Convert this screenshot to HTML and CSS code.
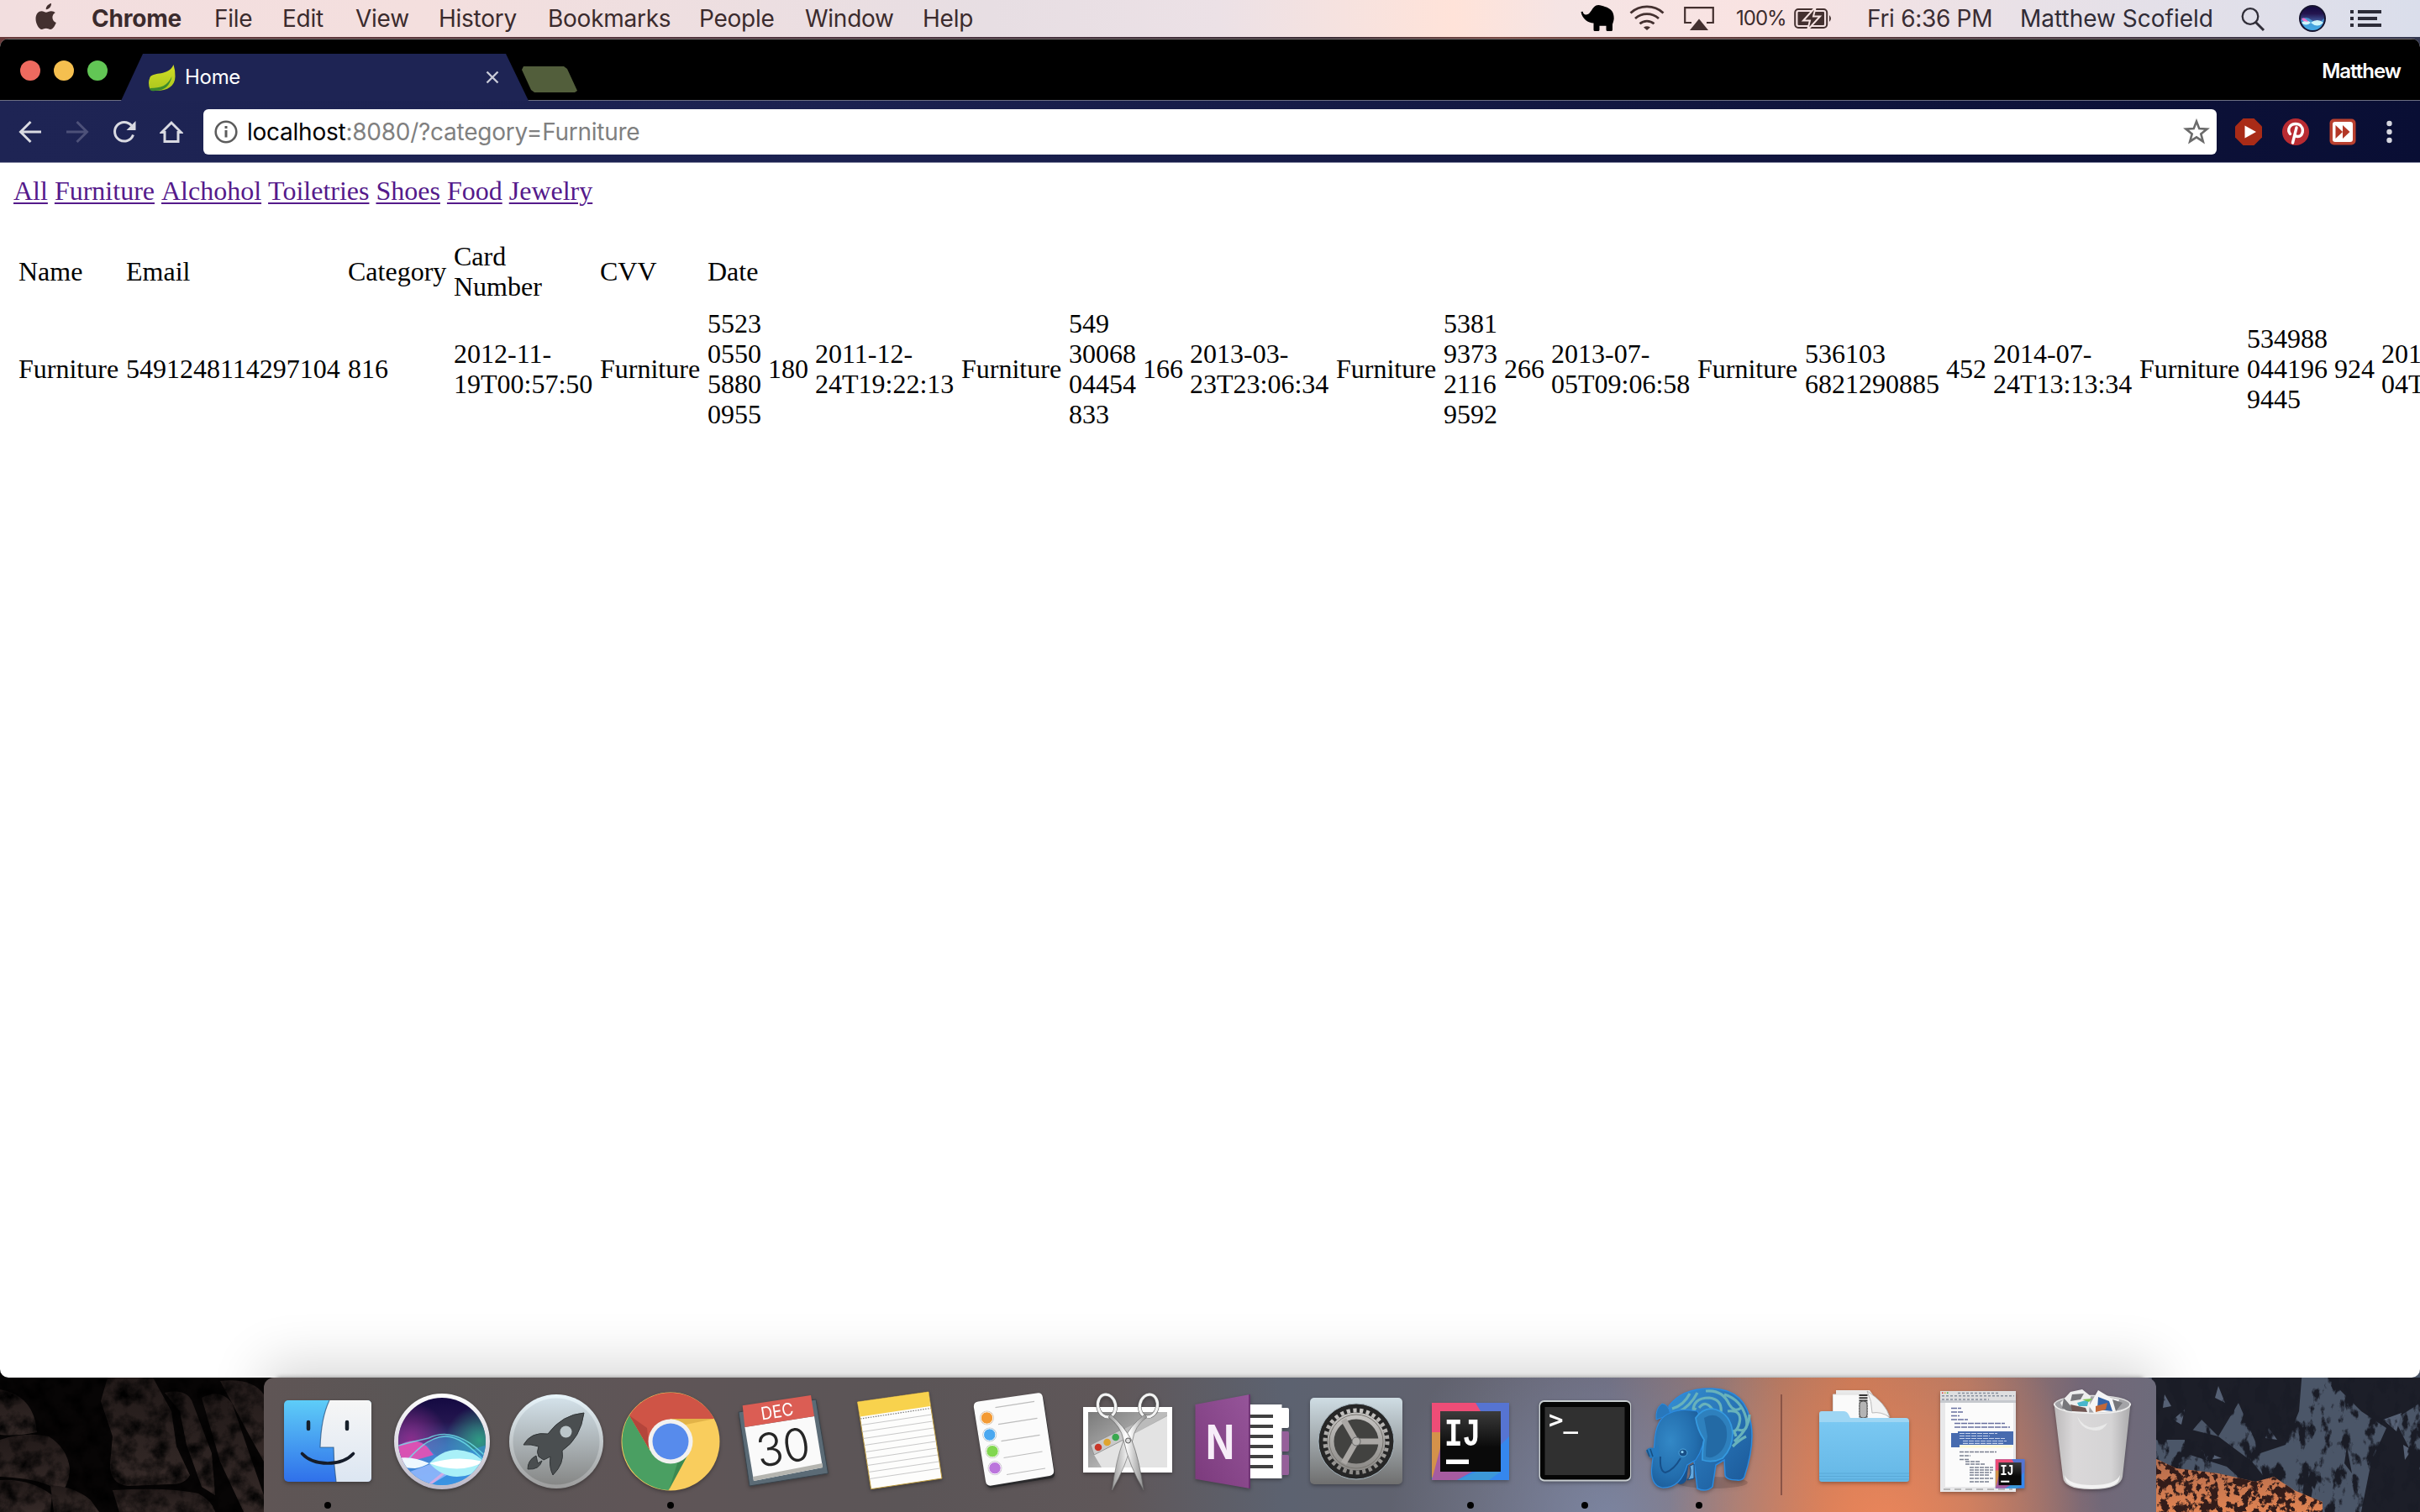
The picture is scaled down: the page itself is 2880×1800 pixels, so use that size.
FILE: index.html
```html
<!DOCTYPE html>
<html lang="en">
<head>
<meta charset="utf-8">
<title>Home</title>
<link rel="stylesheet" href="styles.css">
</head>
<body>
<svg class="wallpaper" viewBox="0 0 2880 170" aria-hidden="true">
  <defs>
    <filter id="rough" x="0" y="0" width="100%" height="100%" color-interpolation-filters="sRGB">
      <feTurbulence type="fractalNoise" baseFrequency="0.06 0.035" numOctaves="5" seed="14"/>
      <feColorMatrix values="0 0 0 0 0.1  0 0 0 0 0.11  0 0 0 0 0.15  9 0 0 0 -4.7"/>
      <feComposite in2="SourceGraphic" operator="in"/>
    </filter>
    <filter id="embers" x="0" y="0" width="100%" height="100%" color-interpolation-filters="sRGB">
      <feTurbulence type="fractalNoise" baseFrequency="0.1" numOctaves="4" seed="9"/>
      <feColorMatrix values="0 0 0 0 0.2  0 0 0 0 0.11  0 0 0 0 0.1  11 0 0 0 -5.2"/>
      <feComposite in2="SourceGraphic" operator="in"/>
    </filter>
    <filter id="grain" x="0" y="0" width="100%" height="100%" color-interpolation-filters="sRGB">
      <feTurbulence type="fractalNoise" baseFrequency="0.05" numOctaves="5" seed="2"/>
      <feColorMatrix values="0 0 0 0 0  0 0 0 0 0  0 0 0 0 0  2 0 0 0 -.75"/>
      <feComposite in2="SourceGraphic" operator="in"/>
    </filter>
    <linearGradient id="rock" x1="0" y1="0" x2="0" y2="1"><stop offset="0" stop-color="#221a19"/><stop offset="1" stop-color="#352a28"/></linearGradient>
    <linearGradient id="ember" x1="0" y1="0" x2="0" y2="1"><stop offset="0" stop-color="#b06a4c"/><stop offset="1" stop-color="#e08352"/></linearGradient>
  </defs>
  <rect width="2880" height="170" fill="#070505"/>
  <g fill="url(#rock)">
    <path d="M0 24Q34 30 42 62L44 75Q20 80 0 78Z"/>
    <path d="M0 84Q30 74 58 80Q80 94 83 118Q82 140 72 146Q52 130 0 128Z"/>
    <path d="M0 132Q36 130 62 150L60 170H0Z"/>
    <path d="M128 10H182L204 50L210 92L226 126Q220 138 200 137L152 139Q130 136 131 112L134 80L120 38Z"/>
    <path d="M134 144Q200 140 236 148Q252 156 256 170H142Z"/>
    <path d="M196 28Q224 22 230 42L252 100L256 150L240 140L222 90L214 50Z"/>
    <path d="M240 34Q262 22 276 40L300 110L314 150V170H290L262 110Z"/>
    <path d="M60 138Q90 140 108 156L118 170H64Z"/>
    <path d="M262 14Q300 10 314 30V110L292 70Z"/>
  </g>
  <rect width="314" height="170" filter="url(#grain)"/>
  <rect x="2540" width="340" height="170" fill="#4b5668"/>
  <g fill="#1c1e28">
    <path d="M2560 0H2740L2736 50L2720 90L2690 100L2664 40L2640 80L2620 60L2600 84L2566 84Z"/>
    <path d="M2770 10H2880V40L2850 60L2870 100L2880 120V170H2810L2822 110L2840 70L2810 50Z"/>
    <path d="M2600 70L2640 80L2680 110L2720 160H2700L2650 116L2600 100Z"/>
    <path d="M2744 116L2752 144L2748 168L2740 150Z"/><path d="M2793 92L2799 124L2790 112Z"/>
  </g>
  <path d="M2586 60l14-12-4 18zM2640 20l8 20-12-6zM2836 60l22-8-6 22zM2700 70l10 14-14-2zM2620 96l24 10-18 2zM2860 90l10 6-8 12zM2576 30l8 14-10 2z" fill="#566175"/>
  <rect x="2560" width="320" height="170" filter="url(#rough)"/>
  <path d="M2560 104L2590 118L2640 124L2684 134L2706 128L2730 144L2764 158V170H2560Z" fill="url(#ember)"/>
  <path d="M2560 104L2590 118L2640 124L2684 134L2706 128L2730 144L2764 158V170H2560Z" filter="url(#embers)"/>
</svg>

<header class="menubar">
  <svg class="apple" viewBox="0 0 28 32"><path d="M20 0c.4 3.6-2.8 7.400-6.200 7.200C13.300 4 16.600.5 20 0zM24.800 10.900c-5 3-4.200 9.900 1 12.100-1.200 3.200-3.800 8-6.800 8-2 0-2.800-1.200-5.200-1.200S10.500 31 8.700 31C5.200 31 1.500 24 1.500 18.300c0-5.800 3.500-9 7-9 2.200 0 4 1.500 5.400 1.500 1.300 0 3.500-1.600 6.100-1.600 2 0 3.900 1 4.800 1.700z"/></svg>
  <nav class="menus">
    <span class="app-name">Chrome</span><span>File</span><span>Edit</span><span>View</span><span>History</span><span>Bookmarks</span><span>People</span><span>Window</span><span>Help</span>
  </nav>
  <div class="status">
    <svg viewBox="0 0 40 44"><path fill="#000" d="M.5 14l2.200-.3c.5 3.600 3 4.600 6.500 3.100C13 14 14 9 18.500 6.500c3-1.500 7 .2 10.500 1.500 7 2 10.800 6 10.700 14-.2 3-1.200 5-1.700 7v6.500q0 1.500-1.500 1.500H32q-1.500 0-1.500-1.500v-4.700h-8v4.700q0 1.500-1.500 1.500h-4q-1.500 0-1.500-1.500V27.500C9 27 2 23 .5 14z"/></svg>
    <svg viewBox="0 0 42 44" fill="none" stroke="#43302f" stroke-width="2.800"><path d="M1.500 15.500a29 29 0 0 1 39 0M7 22a21 21 0 0 1 28 0M12.500 28.300a13 13 0 0 1 17 0"/><path d="M17 32.500q4-2.500 8 0L21 36z" fill="#43302f" stroke="none"/></svg>
    <svg viewBox="0 0 36 44"><path d="M9 27H1.200V9.200H34.800V27H27" fill="none" stroke="#43302f" stroke-width="2.200"/><path d="M18 22.500L29 36H7z" fill="#43302f"/></svg>
    <span class="percent">100%</span>
    <svg viewBox="0 0 46 44"><rect x="1.200" y="11" width="38" height="22" rx="4" fill="none" stroke="#43302f" stroke-width="2"/><rect x="4.500" y="14" width="31.500" height="16" rx="1" fill="#43302f"/><path d="M42 18q4 4 0 8z" fill="#43302f"/><path d="M26 8L11 24.500h8L16 36L31 19.500h-8z" fill="#43302f" stroke="#f6e3e2" stroke-width="2"/></svg>
    <span class="clock">Fri 6:36 PM</span>
    <span class="user">Matthew Scofield</span>
    <svg viewBox="0 0 30 44" fill="none" stroke="#302e38"><circle cx="11" cy="19.500" r="9.300" stroke-width="2.300"/><path d="M17.500 26.500L27 36" stroke-width="3"/></svg>
    <svg viewBox="0 0 32 44"><circle cx="16" cy="22" r="16" fill="#15132e"/><circle cx="16" cy="22" r="14" fill="url(#siri-bg)"/><path d="M2 24Q8 18 15 24T30 22Q28 36 16 36Q6 36 2 24z" fill="#4bb8ee" opacity=".7"/><path d="M3 27Q9 22 14 27Q22 21 29 27Q22 34 14 27Q8 32 3 27z" fill="#dff" opacity=".9"/><path d="M3 22Q7 20 11 26L5 25z" fill="#ee74c8"/></svg>
    <svg viewBox="0 0 38 44" fill="#2c2c38"><path d="M0 12h4v4H0zM9 12h28v4H9zM0 20h4v4H0zM9 20h23v4H9zM0 28h4v4H0zM9 28h28v4H9z"/></svg>
  </div>
</header>

<main class="window">
  <div class="tabstrip">
    <div class="lights"><i class="close"></i><i class="minimise"></i><i class="maximise"></i></div>
    <div class="tab">
      <svg class="leaf" viewBox="0 0 32 32"><defs><linearGradient id="leafg" x1="0" y1="0" x2="0" y2="1"><stop offset="0" stop-color="#d3de25"/><stop offset="1" stop-color="#aac71e"/></linearGradient></defs><path d="M30 0q2 6 2 14c0 12-10 17.500-24 17l-6-2q-3-7 0-14C6 8 24 14 30 0z" fill="url(#leafg)"/><path d="M2 28c13 0 21-3 26-14-2 11-9 17-20 17-4 1-7-1-6-3z" fill="#3c8b2c"/></svg>
      <span class="tab-title">Home</span>
      <svg class="tab-close" viewBox="0 0 16 16"><path d="M1.500 1.500l13 13m0-13l-13 13" stroke="#c9cbd8" stroke-width="2.400"/></svg>
    </div>
    <div class="new-tab"></div>
    <span class="profile">Matthew</span>
  </div>
  <div class="toolbar">
    <svg class="nav-icon" viewBox="0 0 28 28" fill="none" stroke="#d9dae2" stroke-width="3"><path d="M27 14H3M14.500 2L2.500 14l12 12"/></svg>
    <svg class="nav-icon" viewBox="0 0 28 28" fill="none" stroke="#4d5179" stroke-width="3"><path d="M1 14h24M13.500 2l12 12-12 12"/></svg>
    <svg class="nav-icon" viewBox="0 0 28 28"><path d="M24.500 17.500A11.300 11.300 0 1 1 22.500 6.500" fill="none" stroke="#d9dae2" stroke-width="3"/><path d="M27.500 1v11h-11z" fill="#d9dae2"/></svg>
    <svg class="nav-icon" viewBox="0 0 28 28" fill="none" stroke="#d9dae2" stroke-width="3"><path d="M2.500 14.500L14 3l11.500 11.500H22V25.500H6V14.500z"/></svg>
    <div class="omnibox">
      <svg class="info" viewBox="0 0 28 28"><circle cx="14" cy="14" r="12.300" fill="none" stroke="#5c5c5c" stroke-width="2.600"/><path d="M12.500 12h3v8.500h-3zM12.500 7h3v3h-3z" fill="#5c5c5c"/></svg>
      <span class="url"><b>localhost</b>:8080/?category=Furniture</span>
      <svg class="star" viewBox="0 0 32 32"><path d="M16 3.500l3.300 8.600 9.200.5-7.200 5.800 2.500 9-7.800-5.100-7.800 5.100 2.500-9-7.200-5.800 9.200-.5z" fill="none" stroke="#6b6b6b" stroke-width="2.600"/></svg>
    </div>
    <svg class="ext" viewBox="0 0 32 32"><path d="M9.500 0h13L32 9.500v13L22.500 32h-13L0 22.500v-13z" fill="#a92b17"/><path d="M11.500 8.500L25 16l-13.500 7.500z" fill="#fff"/></svg>
    <svg class="ext" viewBox="0 0 32 32"><circle cx="16" cy="16" r="16" fill="#b92b31"/><path d="M9.500 18.500C5.500 13 9 6.500 16 6.500c11 0 10.500 15 2.500 15-2 0-3.500-1-3.500-2.500M17 11l-4.500 18" fill="none" stroke="#fff" stroke-width="3.400" stroke-linecap="round"/></svg>
    <svg class="ext" viewBox="0 0 32 32"><rect x=".5" y=".5" width="31" height="31" rx="5" fill="#b9402f"/><rect x="4" y="4" width="24" height="24" rx="3" fill="#fff"/><path d="M7.500 8l8.500 8-8.500 8zM16 8l8.500 8-8.500 8z" fill="#b33726"/></svg>
    <svg class="ext" viewBox="0 0 32 32" fill="#d5d6df"><circle cx="15.500" cy="6" r="3.200"/><circle cx="15.500" cy="16" r="3.200"/><circle cx="15.500" cy="26" r="3.200"/></svg>
  </div>
  <section class="page">
    <nav class="categories"><a href="#">All</a> <a href="#">Furniture</a> <a href="#">Alchohol</a> <a href="#">Toiletries</a> <a href="#">Shoes</a> <a href="#">Food</a> <a href="#">Jewelry</a></nav>
    <table class="purchases">
      <colgroup><col class="name"><col class="d16"><col class="category"><col class="date"><col class="name"><col class="d4"><col class="d3"><col class="date"><col class="name"><col class="d5"><col class="d3"><col class="date"><col class="name"><col class="d4"><col class="d3"><col class="date"><col class="name"><col class="d10"><col class="d3"><col class="date"><col class="name"><col class="d6"><col class="d3"><col class="date"></colgroup>
      <tr><td>Name</td><td>Email</td><td>Category</td><td>Card<br>Number</td><td>CVV</td><td>Date</td></tr>
      <tr>
        <td>Furniture</td><td>5491248114297104</td><td>816</td><td>2012-11-<br>19T00:57:50</td>
        <td>Furniture</td><td>5523<br>0550<br>5880<br>0955</td><td>180</td><td>2011-12-<br>24T19:22:13</td>
        <td>Furniture</td><td>549<br>30068<br>04454<br>833</td><td>166</td><td>2013-03-<br>23T23:06:34</td>
        <td>Furniture</td><td>5381<br>9373<br>2116<br>9592</td><td>266</td><td>2013-07-<br>05T09:06:58</td>
        <td>Furniture</td><td>536103<br>6821290885</td><td>452</td><td>2014-07-<br>24T13:13:34</td>
        <td>Furniture</td><td>534988<br>044196<br>9445</td><td>924</td><td>201<br>04T</td>
      </tr>
    </table>
  </section>
</main>

<footer class="dock">
  <!-- Finder -->
  <div class="slot running"><svg viewBox="0 0 136 160">
    <defs><linearGradient id="fb" x1="0" y1="0" x2="0" y2="1"><stop offset="0" stop-color="#5ecdf8"/><stop offset="1" stop-color="#2f70ea"/></linearGradient><linearGradient id="fw" x1="0" y1="0" x2="0" y2="1"><stop offset="0" stop-color="#f6f6f6"/><stop offset="1" stop-color="#dce6f2"/></linearGradient></defs>
    <rect x="16" y="27" width="104" height="97" rx="5" fill="url(#fb)"/>
    <path d="M70 27H115q5 0 5 5V119q0 5-5 5H78Q75 103 75 83H59Q60 48 70 27z" fill="url(#fw)"/>
    <path d="M70 27Q60 48 59 83H75Q75 103 78 124" fill="none" stroke="#27507a" stroke-width="1.200" opacity=".7"/>
    <path d="M45 53v8M91 53v8" stroke="#16202a" stroke-width="4.500" stroke-linecap="round"/>
    <path d="M37.500 90.500Q48 102 68 102T98.500 90.500" fill="none" stroke="#151c2a" stroke-width="3.600" stroke-linecap="round"/>
  </svg></div>
  <!-- Siri -->
  <div class="slot"><svg viewBox="0 0 136 160">
    <defs><linearGradient id="siri-bg" x1="0" y1="0" x2="0" y2="1"><stop offset="0" stop-color="#120840"/><stop offset=".3" stop-color="#24164f"/><stop offset=".55" stop-color="#3a4a8c"/><stop offset="1" stop-color="#2c8bd4"/></linearGradient>
    <radialGradient id="sg" cx=".92" cy=".5" r=".38"><stop offset="0" stop-color="#2f9a83"/><stop offset="1" stop-color="#2f9a83" stop-opacity="0"/></radialGradient><radialGradient id="sp" cx=".15" cy=".5" r=".42"><stop offset="0" stop-color="#8a2d8c"/><stop offset="1" stop-color="#8a2d8c" stop-opacity="0"/></radialGradient><linearGradient id="ring" x1="0" y1="0" x2="0" y2="1"><stop offset="0" stop-color="#fff"/><stop offset="1" stop-color="#bcb9c8"/></linearGradient>
    <clipPath id="sc"><circle cx="68" cy="76" r="52"/></clipPath></defs>
    <circle cx="68" cy="76" r="57" fill="url(#ring)"/>
    <g clip-path="url(#sc)"><rect x="15" y="20" width="106" height="110" fill="url(#siri-bg)"/><rect x="15" y="20" width="106" height="110" fill="url(#sg)"/><rect x="15" y="20" width="106" height="110" fill="url(#sp)"/>
    <path d="M10 98Q30 95 48 80Q74 58 98 78Q110 92 122 96V132H10z" fill="#42aef0" opacity=".45"/>
    <path d="M10 86Q32 66 52 82Q66 106 90 92Q108 84 122 80V132H30z" fill="#3e8fe8" opacity=".5"/>
    <path d="M12 84Q34 68 50 82L58 92Q32 100 16 102z" fill="#f04fb2" opacity=".85"/>
    <path d="M12 82Q34 76 52 72Q84 56 122 96M24 102Q50 70 72 70T122 104" fill="none" stroke="#6fe2ea" stroke-width="1.500" opacity=".8"/>
    <path d="M54 103L74 116L50 130L30 112z" fill="#9bbcff" opacity=".8"/><path d="M72 112L50 130" stroke="#f1a8dc" stroke-width="3" opacity=".7"/>
    <path d="M12 96Q28 94 38 97Q46 99 53 102Q44 107 36 108Q24 108 14 104z" fill="#eef8ff"/>
    <path d="M53 102Q68 86 86 86Q104 87 116 98V106Q104 118 86 118Q68 118 53 102z" fill="#a9f0f8"/><path d="M53 102Q86 92 118 100Q90 116 53 102z" fill="#fff"/></g>
  </svg></div>
  <!-- Launchpad -->
  <div class="slot"><svg viewBox="0 0 136 160">
    <defs><linearGradient id="lp" x1="0" y1="0" x2="0" y2="1"><stop offset="0" stop-color="#d3e1e9"/><stop offset="1" stop-color="#868786"/></linearGradient><linearGradient id="lr" x1="0" y1="0" x2="0" y2="1"><stop offset="0" stop-color="#e8f5fb"/><stop offset="1" stop-color="#9c9c9c"/></linearGradient></defs>
    <circle cx="68" cy="76" r="56" fill="url(#lr)"/><circle cx="68" cy="76" r="51.500" fill="url(#lp)"/>
    <g fill="#4a4e50" stroke="#303436" stroke-width="1"><path d="M101 42Q75 44 58 67Q38 64 29 80Q38 79 47 82Q44 89 47 94L53 98L61 94Q59 106 64 116Q78 102 75 87Q97 72 101 42z"/><path d="M44 93Q34 98 34 109Q48 110 51 99L46 102z"/></g><circle cx="79.500" cy="64.500" r="7" fill="#bcc6ca"/>
  </svg></div>
  <!-- Chrome -->
  <div class="slot running"><svg viewBox="0 0 136 160">
    <circle cx="68" cy="76" r="58.500" fill="#f9cd5d"/>
    <path d="M19 45A58.500 58.500 0 0 1 120 49H68L41 82z" fill="#cf5446"/>
    <path d="M19 45A58.500 58.500 0 0 0 65.500 134L89 91L68 102L43 86z" fill="#4a9f62"/>
    <path d="M68 49H120L86 56z" fill="#d9a840" opacity=".7"/><path d="M19 45L43 86L40 60z" fill="#b4453b"/><path d="M89 91L66 134L78 96z" fill="#35804a" opacity=".7"/>
    <circle cx="68" cy="76" r="26.500" fill="#f2f1f0"/><circle cx="68" cy="76" r="21.500" fill="#578bec"/>
  </svg></div>
  <!-- Calendar -->
  <div class="slot"><svg viewBox="0 0 136 160">
    <path d="M13 41L105 26L119.500 114L26 129z" fill="#5b6b76" stroke="#39444c"/>
    <path d="M20.400 59L103 46L113 107L31 123z" fill="#fafafa"/><path d="M30 118L112.500 102L113 107L31 123z" fill="#b5b5b0"/>
    <path d="M17.700 33.300L99 21L103 46L20.400 59z" fill="#db5d54"/>
    <text class="cal-month" transform="translate(60 47.500) rotate(-9)" text-anchor="middle" textLength="39" lengthAdjust="spacingAndGlyphs">DEC</text>
    <text class="cal-day" transform="translate(69 102) rotate(-9)" text-anchor="middle" textLength="64" lengthAdjust="spacingAndGlyphs">30</text>
  </svg></div>
  <!-- Notes -->
  <div class="slot"><svg viewBox="0 0 136 160">
    <path d="M18.500 29L103 17L119 120L34.600 132.700z" fill="#fdfdfc" stroke="#b9973a"/>
    <path d="M18.500 29L103 17L105 34L21.700 46.500z" fill="#f8d24d"/><path d="M22 49L105.500 36.500" stroke="#777" stroke-width="1.200" stroke-dasharray="1.500 1.500"/>
    <path d="M23 56.500L106.500 44M24.200 64.500L107.700 52M25.500 72.500L109 60M26.700 80.500L110.200 68M28 88.500L111.500 76M29.200 96.500L112.700 84M30.500 104.500L114 92M31.700 112.500L115.200 100M33 120.500L116.500 108" stroke="#c9c9c9" stroke-width="1.200"/>
  </svg></div>
  <!-- Reminders -->
  <div class="slot"><svg viewBox="0 0 136 160">
    <path d="M26 31L97 21q6-1 7 5L117 113q1 6-5 7L43 131q-6 1-7-5L21 38q-1-6 5-7z" fill="#2a2a2c"/>
    <path d="M26 28.500L96 18.500q6-1 7 5L116 110q1 6-5 7L42 128.500q-6 1-7-5L21 36q-1-6.500 5-7.500z" fill="#fbfbfb"/>
    <g stroke="#ccc" stroke-width="1"><circle cx="36.500" cy="48" r="8" fill="#f39a34"/><circle cx="39.700" cy="68" r="8" fill="#4aa8f0"/><circle cx="43" cy="87.700" r="8" fill="#82d750"/><circle cx="46" cy="107.700" r="8" fill="#bb75dc"/></g>
    <g fill="none" stroke="#fff" stroke-width="1"><circle cx="36.500" cy="48" r="7.200"/><circle cx="39.700" cy="68" r="7.200"/><circle cx="43" cy="87.700" r="7.200"/><circle cx="46" cy="107.700" r="7.200"/></g>
    <path d="M46.500 35.700L93 28.300M50 55.700L96.500 48.300M53.500 75.700L99.500 68.300M56.500 95.500L102.500 88M60 115.500L106 108" stroke="#bdbdbd" stroke-width="1.200"/>
  </svg></div>
  <!-- Grab -->
  <div class="slot"><svg viewBox="0 0 136 160">
    <defs><linearGradient id="gb" x1="0" y1="0" x2="1" y2="1"><stop offset="0" stop-color="#7a7a7a"/><stop offset=".5" stop-color="#aaa"/><stop offset="1" stop-color="#eee"/></linearGradient><linearGradient id="blade" x1="0" y1="0" x2="1" y2="0"><stop offset="0" stop-color="#999"/><stop offset=".5" stop-color="#fff"/><stop offset="1" stop-color="#8b8b8b"/></linearGradient></defs>
    <rect x="15" y="35" width="106" height="78" fill="#fff"/><rect x="21" y="41" width="94" height="66" fill="url(#gb)"/>
    <path d="M24 80L106 41H115V45L28 93z" fill="#bbb"/><path d="M28 92L115 46V107H37z" fill="#e3e3e3"/><path d="M24 80L64 60L67 72L28 92z" fill="#c9c9c9" stroke="#888" stroke-width=".8"/>
    <circle cx="33" cy="83" r="4.300" fill="#c93628"/><circle cx="43.600" cy="77" r="4.300" fill="#dfa42f"/><circle cx="53.700" cy="71" r="4.300" fill="#3aa84f"/>
    <g fill="none" stroke="#666" stroke-width="4.400"><ellipse cx="43" cy="33.500" rx="10.500" ry="13.500" transform="rotate(-12 43 33)"/><ellipse cx="93" cy="33.500" rx="10.500" ry="13.500" transform="rotate(12 93 33)"/></g>
    <g fill="none" stroke="#f3f3f3" stroke-width="3.200"><ellipse cx="43" cy="33.500" rx="10.500" ry="13.500" transform="rotate(-12 43 33)"/><ellipse cx="93" cy="33.500" rx="10.500" ry="13.500" transform="rotate(12 93 33)"/></g>
    <path d="M88 44L91 47Q76 58 74 74Q66 106 49.500 134Q54 98 63 75Q70 58 88 44z" fill="url(#blade)" stroke="#777" stroke-width=".7"/>
    <path d="M48 44L45 47Q60 58 63 74Q70 106 87 134Q82 98 73 75Q64 58 48 44z" fill="url(#blade)" stroke="#666" stroke-width=".7"/><circle cx="68.500" cy="75" r="3" fill="#ddd" stroke="#555"/>
  </svg></div>
  <!-- OneNote -->
  <div class="slot"><svg viewBox="0 0 136 160">
    <defs><linearGradient id="on" x1="0" y1="1" x2="1" y2="0"><stop offset="0" stop-color="#7b3a7c"/><stop offset="1" stop-color="#96559a"/></linearGradient></defs>
    <path d="M110 36h12q2 0 2 2v20q0 2-2 2h-12zM70 32h45.500v88H70z" fill="#fff"/><path d="M115.500 64h7q1.500 0 1.500 2v20q0 2-1.500 2h-7zM115.500 92h7q1.500 0 1.500 2v20q0 2-1.500 2h-7z" fill="#96609a"/>
    <path d="M77 46h28M77 58h28M77 70h28M77 82h28M77 94h28M77 106h28" stroke="#404040" stroke-width="4"/>
    <path d="M12.500 32L77.600 20V132L12.500 120.700z" fill="url(#on)"/><path d="M77 20v112" stroke="#65286a" stroke-width="1.500"/>
    <text class="onenote" x="25" y="96.500" textLength="34" lengthAdjust="spacingAndGlyphs">N</text>
  </svg></div>
  <!-- System Preferences -->
  <div class="slot"><svg viewBox="0 0 136 160">
    <defs><linearGradient id="pf" x1="0" y1="0" x2="0" y2="1"><stop offset="0" stop-color="#cfdde4"/><stop offset="1" stop-color="#6f6f6f"/></linearGradient><linearGradient id="gear" x1="0" y1="0" x2="0" y2="1"><stop offset="0" stop-color="#c4c2c0"/><stop offset="1" stop-color="#8e8c89"/></linearGradient></defs>
    <rect x="13" y="24" width="110" height="103" rx="5" fill="url(#pf)"/><circle cx="68" cy="76" r="45" fill="#262626" stroke="#a8b7c0" stroke-width="1"/>
    <circle cx="68" cy="76" r="37" fill="none" stroke="url(#gear)" stroke-width="5" stroke-dasharray="4.200 3.548"/>
    <circle cx="68" cy="76" r="30.500" fill="#424240" stroke="url(#gear)" stroke-width="8"/><circle cx="68" cy="76" r="32" fill="none" stroke="#77746f" stroke-width="1"/>
    <path d="M68 76H98M68 76L53 50M68 76L53 102" stroke="#aaa7a4" stroke-width="7"/><circle cx="68" cy="76" r="5" fill="#b4b2af" stroke="#666"/>
  </svg></div>
  <!-- IntelliJ IDEA -->
  <div class="slot running"><svg viewBox="0 0 136 160">
    <defs><linearGradient id="ijk" x1="0" y1="0" x2="0" y2="1"><stop offset="0" stop-color="#3b3b3b"/><stop offset=".6" stop-color="#0a0a0a"/></linearGradient>
    <g id="ij"><path d="M22 30H114V122H22z" fill="#3587ee"/><path d="M22 30H75L88 50L40 76L22 66z" fill="#ee4d77"/><path d="M74 30H114V70L104 80L80 40z" fill="#5674d2"/><path d="M22 65H40L32 100L22 120z" fill="#d4924a"/><path d="M32 84L22 122H52L70 112z" fill="#a65ca0"/><path d="M52 122L80 110L104 112L90 122z" fill="#3c98d8"/><path d="M32 40H104V112H32z" fill="url(#ijk)"/><text class="ij-text" x="37" y="81" textLength="43" lengthAdjust="spacingAndGlyphs">IJ</text><path d="M39 97.500H66V103H39z" fill="#fff"/></g></defs>
    <use href="#ij"/>
  </svg></div>
  <!-- Terminal -->
  <div class="slot running"><svg viewBox="0 0 136 160">
    <rect x="13.600" y="27" width="109.500" height="96.500" rx="6" fill="#c9cfd1"/><rect x="15" y="29" width="107" height="92.500" rx="5" fill="#050505"/><rect x="20.500" y="35" width="95" height="81" fill="#303030"/>
    <text class="prompt" x="25" y="60" textLength="35" lengthAdjust="spacingAndGlyphs">&gt;_</text>
  </svg></div>
  <!-- Postgres elephant -->
  <div class="slot running"><svg viewBox="0 0 136 160">
    <defs><linearGradient id="el" x1="0" y1="0" x2="1" y2="1"><stop offset="0" stop-color="#358fd3"/><stop offset="1" stop-color="#1a5797"/></linearGradient><radialGradient id="eh" cx=".35" cy=".4" r=".75"><stop offset="0" stop-color="#3388c6"/><stop offset=".6" stop-color="#236eae"/><stop offset="1" stop-color="#195590"/></radialGradient></defs>
    <ellipse cx="84" cy="125" rx="42" ry="7" fill="#000" opacity=".14"/>
    <path d="M38 100L41 125Q48 130 53 122L56 100z" fill="#17528f"/>
    <path d="M32 34Q48 12 84 13Q124 14 130 56Q134 82 122 118Q120 123 113 122Q100 122 99 116L98 98L88 104L84 130Q76 137 66 132L62 100L40 70z" fill="url(#el)" stroke="#2b8be0" stroke-width="1.500"/>
    <g fill="none" stroke="#68b2bb" stroke-width="3.200"><path d="M61 42Q60 24 80 24Q96 26 94 42M68 36Q76 26 84 38M36 37Q50 33 57 19M42 42Q58 34 66 18M48 46Q60 44 64 36M76 16Q96 14 104 32Q110 42 118 36M102 40Q120 38 116 54T102 60M98 20Q118 26 124 48Q128 66 114 62M110 76Q128 60 128 44M108 82Q116 74 124 70M112 70Q110 62 106 64"/></g>
    <path d="M17 50Q16 36 24 31Q32 32 34 44z" fill="#2877bb" stroke="#2b8be0"/>
    <path d="M34 42Q16 48 15 78L12 104Q9 128 24 131Q46 132 54 104L64 98Q74 84 76 60L66 40Q46 36 34 42z" fill="url(#eh)" stroke="#2b8be0" stroke-width="1.200"/>
    <path d="M22 94Q21 112 28 113Q38 110 46 96" fill="none" stroke="#174f88" stroke-width="2"/><path d="M20 94L10 96L5 88Q6 82 15 84L20 80z" fill="#2679bd"/><path d="M6 86L9 94M10 85L13 94" stroke="#174f80" stroke-width="1.500"/>
    <path d="M57 105Q60 116 54 122L62 120L62 103z" fill="#63a9df" stroke="#15477c"/>
    <path d="M64 48Q74 34 88 38Q106 44 108 66Q108 84 96 96Q84 102 72 98Q72 84 74 74Q66 62 64 48z" fill="#2e80bd" stroke="#3599df" stroke-width="1.800"/><path d="M74 48Q90 38 100 58Q104 76 94 88Q84 98 76 94Q76 80 78 70z" fill="#236aa5"/>
    <ellipse cx="49" cy="89.500" rx="5" ry="4.500" fill="#184f87" stroke="#4da5df"/><circle cx="48" cy="88.500" r="1.600" fill="#8dd3f5"/>
  </svg></div>
  <div class="divider"></div>
  <!-- Downloads -->
  <div class="slot"><svg viewBox="0 0 136 160">
    <defs><linearGradient id="fo" x1="0" y1="0" x2="0" y2="1"><stop offset="0" stop-color="#7ac8f2"/><stop offset="1" stop-color="#65b7e6"/></linearGradient></defs>
    <path d="M35 15H75L100 50V60H35z" fill="#e9e9e9"/><path d="M31.500 20H70Q80 20 98 48V60H31.500z" fill="#fafafa" stroke="#ddd"/><path d="M72 16Q94 30 99 47Q88 40 78 42Q78 28 72 16z" fill="#f2f2f2" stroke="#aaa" stroke-width=".8"/>
    <path d="M67.500 20V50" stroke="#333" stroke-width="10" stroke-dasharray="2 1.200"/><rect x="63" y="28" width="9" height="20" rx="4" fill="#b4b4b4" stroke="#555"/>
    <path d="M18 40H44q4 0 6 4l2 4H118q4 0 4 4V70H15V43q0-3 3-3z" fill="#9ed6f4"/><path d="M15 53H122V121q0 3-3 3H18q-3 0-3-3z" fill="url(#fo)"/><path d="M15 114H122M15 117.500H122M15 121H122" stroke="#57a5d3" stroke-width=".8"/>
  </svg></div>
  <!-- Minimised editor window -->
  <div class="slot"><svg viewBox="0 0 136 160">
    <rect x="23" y="16" width="90" height="120" fill="#fbfbfb"/><path d="M23 16h90v11H23z" fill="#dedee0"/><path d="M23 27h90v3H23z" fill="#c6c9ce"/><path d="M23 30h6v106H23zM110 30h3v106h-3zM23 130h90v6H23z" fill="#e8e8ea"/>
    <path d="M25 18.200h1.500" stroke="#d33" stroke-width="1.500"/><path d="M28 18.200h1.500" stroke="#da3" stroke-width="1.500"/><path d="M31 18.200h1.500" stroke="#3a4" stroke-width="1.500"/>
    <path d="M44 18.500h50M25 21.800h86M25 26h56" stroke="#88909d" stroke-width="1.400" stroke-dasharray="3 2"/>
    <path d="M36 36.500h12M36 41h14M36 45.500h10M36 50h20M40 54.500h60M40 59h66" stroke="#6870a0" stroke-width="1.300" stroke-dasharray="7 1"/>
    <path d="M36 66h8v-2h66v16H46v3H36z" fill="#476baf"/><path d="M46 66.500h45M46 69.500h36M46 72.500h54M50 75.500h52M50 78.300h48" stroke="#c5d2ec" stroke-width="1.200" stroke-dasharray="6 1"/>
    <path d="M46 88.500h44M46 93h13M46 97.500h11M53 100h18M53 103h24M58 107h28M58 110h28M58 113h26M58 116h24M58 120h28M58 124h24" stroke="#7b8191" stroke-width="1.300" stroke-dasharray="5 1"/><path d="M27 133h82" stroke="#888" stroke-dasharray="8 5"/><path d="M46 80.500h63v3h-63z" fill="#fff9d5"/>
    <use href="#ij" transform="translate(80.500 86) scale(.376)"/>
  </svg></div>
  <!-- Trash -->
  <div class="slot"><svg viewBox="0 0 136 160">
    <defs><linearGradient id="tr" x1="0" y1="0" x2="1" y2="0"><stop offset="0" stop-color="#bebdbd"/><stop offset=".25" stop-color="#dedddd"/><stop offset=".75" stop-color="#d8d8d8"/><stop offset="1" stop-color="#adadae"/></linearGradient></defs>
    <ellipse cx="68" cy="32" rx="45" ry="10.500" fill="#a3a3a7" stroke="#ddd" stroke-width="1.500"/>
    <path d="M30 30L42 17L56 14L66 22L64 42H36z" fill="#eee"/><path d="M64 34L75 15L90 24L100 26L96 40L70 42z" fill="#f5f5f5"/><path d="M34 24L46 38L42 42L32 36zM44 20L58 19L54 26L42 28zM92 26L104 30L96 40z" fill="#77777b"/><path d="M75 23L88 28L92 40L74 38z" fill="#3464a8"/><path d="M72 34L86 30L84 38L72 41z" fill="#c26838"/><path d="M50 30L64 26L62 34L52 34z" fill="#49b6cc"/><path d="M56 26L68 25L64 29z" fill="#7bc64c"/><path d="M42 32L60 36L62 41L44 40z" fill="#705653"/>
    <path d="M22.500 31Q24 42 68 42.500T113.500 31L104 118Q102 132.500 68 133T33 118z" fill="url(#tr)" opacity=".97"/><path d="M35 116Q40 128 68 128T101 116L100 121Q97 132 68 132T36 121z" fill="#f3f3f3"/>
    <path d="M50 46Q62 68 86 54Q80 66 66 62Q54 60 50 46z" fill="#f1f1f1" opacity=".7"/><path d="M22.500 31Q24 42 68 42.500T113.500 31" fill="none" stroke="#f0f0f0" stroke-width="1.500"/>
  </svg></div>
</footer>
</body>
</html>
```
FILE: styles.css
```css
* { box-sizing: border-box; }

body {
  position: relative;
  display: grid;
  grid-template-rows: 46px 1594px 160px;
  width: 2880px;
  height: 1800px;
  margin: 0;
  overflow: hidden;
  background: linear-gradient(90deg, #6b3c3c, #4a3440 40%, #3c2d36 55%, #7a4a44 62%, #5c3a3c 75%, #343850);
  font-family: Inter, "Liberation Sans", sans-serif;
}

svg { display: block; flex: none; }

.wallpaper {
  position: absolute;
  left: 0;
  bottom: 0;
  width: 2880px;
  height: 170px;
}

/* Menu bar */
.menubar {
  display: flex;
  height: 44px;
  padding-left: 41px;
  background: linear-gradient(90deg, #f2dedf 0, #f4dfde 500px, #e7dee3 1180px, #ece1e6 1450px, #ffe3d9 1730px, #f5e4e4 1860px, #f9e3e2 2080px, #e9e1e7 2400px, #dadeeb 2880px);
  color: #3b2b2d;
  font-size: 28px;
  line-height: 44px;
  white-space: nowrap;
}
.apple { width: 28px; height: 32px; margin: 4px 40px 0 0; fill: #43302f; }
.menus {
  display: grid;
  grid-template-columns: 146px 81px 87px 99px 130px 180px 126px 140px 783px;
  letter-spacing: -.25px;
}
.app-name { font-weight: 700; letter-spacing: -.2px; }
.status {
  display: grid;
  grid-template-columns: 58px 65px 63px 68px 88px 181px 263px 69px 61px 38px;
}
.status svg { height: 44px; justify-self: start; }
.percent { margin-left: -1px; font-size: 24px; letter-spacing: -1px; }
.clock { margin-left: -1px; letter-spacing: -.3px; color: #3a2d33; }
.user { letter-spacing: 0; color: #302c36; }

/* Browser window */
.window {
  position: relative;
  display: flex;
  flex-direction: column;
  overflow: hidden;
  border-radius: 10px;
  background: #fff;
}
.window::after {
  content: "";
  position: absolute;
  left: 330px;
  right: 330px;
  bottom: -60px;
  height: 60px;
  box-shadow: 0 0 64px 16px rgba(0, 0, 0, .16), 0 0 5px rgba(0, 0, 0, .4);
}
.tabstrip {
  display: flex;
  height: 74px;
  padding-left: 24px;
  background: #000;
  border-top: 1px solid #77706f;
  border-bottom: 1px solid #6c6f83;
}
.lights { display: flex; gap: 16px; width: 120px; padding-top: 25px; }
.lights i { width: 24px; height: 24px; border-radius: 50%; }
.close { background: #ee6a5f; }
.minimise { background: #f5bf4f; }
.maximise { background: #62c655; }
.tab {
  display: flex;
  width: 485px;
  height: 56px;
  margin-top: 17px;
  padding: 0 35px 0 32px;
  background: #1e2454;
  clip-path: polygon(26px 0, 458px 0, 485px 100%, 0 100%);
  color: #fff;
}
.leaf { width: 33px; height: 32px; margin-top: 13px; }
.tab-title { margin: 12px 0 0 11px; font-size: 24px; line-height: 32px; letter-spacing: -.3px; }
.tab-close { width: 16px; height: 16px; margin: 20px 0 0 auto; }
.new-tab {
  width: 66px;
  height: 31px;
  margin: 32px 0 0 -8px;
  background: #525e3b;
  clip-path: polygon(0 4px, 2px 0, 50px 0, 54px 3px, 66px 29px, 63px 31px, 15px 31px, 11px 28px);
}
.profile { margin: 22px 23px 0 auto; color: #fff; font-size: 24px; font-weight: 600; line-height: 32px; letter-spacing: -1px; }
.toolbar {
  display: flex;
  align-items: center;
  height: 74px;
  padding-left: 22px;
  background: linear-gradient(90deg, #1e2454, #1b2150 35%, #11163f 70%, #090e34);
  border-bottom: 1px solid #8a8da6;
}
.nav-icon { width: 28px; height: 28px; margin-right: 28px; }
.omnibox {
  display: flex;
  flex: none;
  align-items: center;
  width: 2396px;
  height: 54px;
  margin: 0 22px 0 -4px;
  padding: 0 8px 0 13px;
  border-radius: 6px;
  background: #fff;
}
.info { width: 28px; height: 28px; }
.url { flex: 1; margin-left: 11px; color: #808080; font-size: 28px; letter-spacing: -.25px; }
.url b { color: #000; font-weight: 400; }
.star { width: 32px; height: 32px; }
.ext { width: 32px; height: 32px; margin-right: 24px; }
.ext:last-child { margin-right: 0; }

/* Page */
.page {
  padding: 15px 16px;
  color: #000;
  font: 32px/36px "Liberation Serif", "Times New Roman", serif;
}
.categories { display: flex; gap: 8px; margin-bottom: 36px; }
.categories a { color: #551a8b; text-decoration-thickness: 2px; text-underline-offset: 3px; }
.purchases { width: 2956px; table-layout: fixed; border-spacing: 4px; }
.purchases td { padding: 2px; white-space: nowrap; vertical-align: middle; }
.name { width: 124px; }
.category { width: 122px; }
.date { width: 170px; }
.d3 { width: 52px; }
.d4 { width: 68px; }
.d5 { width: 84px; }
.d6 { width: 100px; }
.d10 { width: 164px; }
.d16 { width: 260px; }

/* Dock */
.dock {
  position: relative;
  display: flex;
  width: 2252px;
  margin-left: 314px;
  padding: 0 8px;
  border-radius: 12px 12px 0 0;
  background:
    radial-gradient(circle at 1930px 180px, rgba(240, 135, 90, .9), rgba(240, 135, 90, 0) 260px),
    radial-gradient(circle at 1600px 170px, rgba(128, 140, 170, .8), rgba(128, 140, 170, 0) 260px),
    linear-gradient(90deg, #5f5555 0, #5a5656 8%, #5f5557 20%, #5b5557 34%, #5f5759 45%, #5c6270 54%, #62626e 64%, #6a6676 71%, #a0766a 78%, #c07656 84%, #ac7766 90%, #736777 96%, #6d6b7b 100%);
}
.slot { position: relative; width: 136px; height: 160px; }
.slot svg { width: 136px; height: 160px; filter: drop-shadow(0 2px 2px rgba(0, 0, 0, .3)); }
.running::after {
  content: "";
  position: absolute;
  left: 64px;
  top: 148px;
  width: 8px;
  height: 8px;
  border-radius: 50%;
  background: #000;
}
.divider { width: 2px; height: 120px; margin: 20px 29px; background: #8a5446; }
.cal-month { fill: #fff; font-size: 21px; }
.cal-day { fill: #262626; font-size: 54px; font-weight: 300; }
.onenote { fill: #f7ecf8; font-size: 57px; font-weight: 700; }
.ij-text { fill: #fff; font: 700 47px "Liberation Mono", monospace; }
.prompt { fill: #fff; font: 700 28px "DejaVu Sans Mono", monospace; }
```
